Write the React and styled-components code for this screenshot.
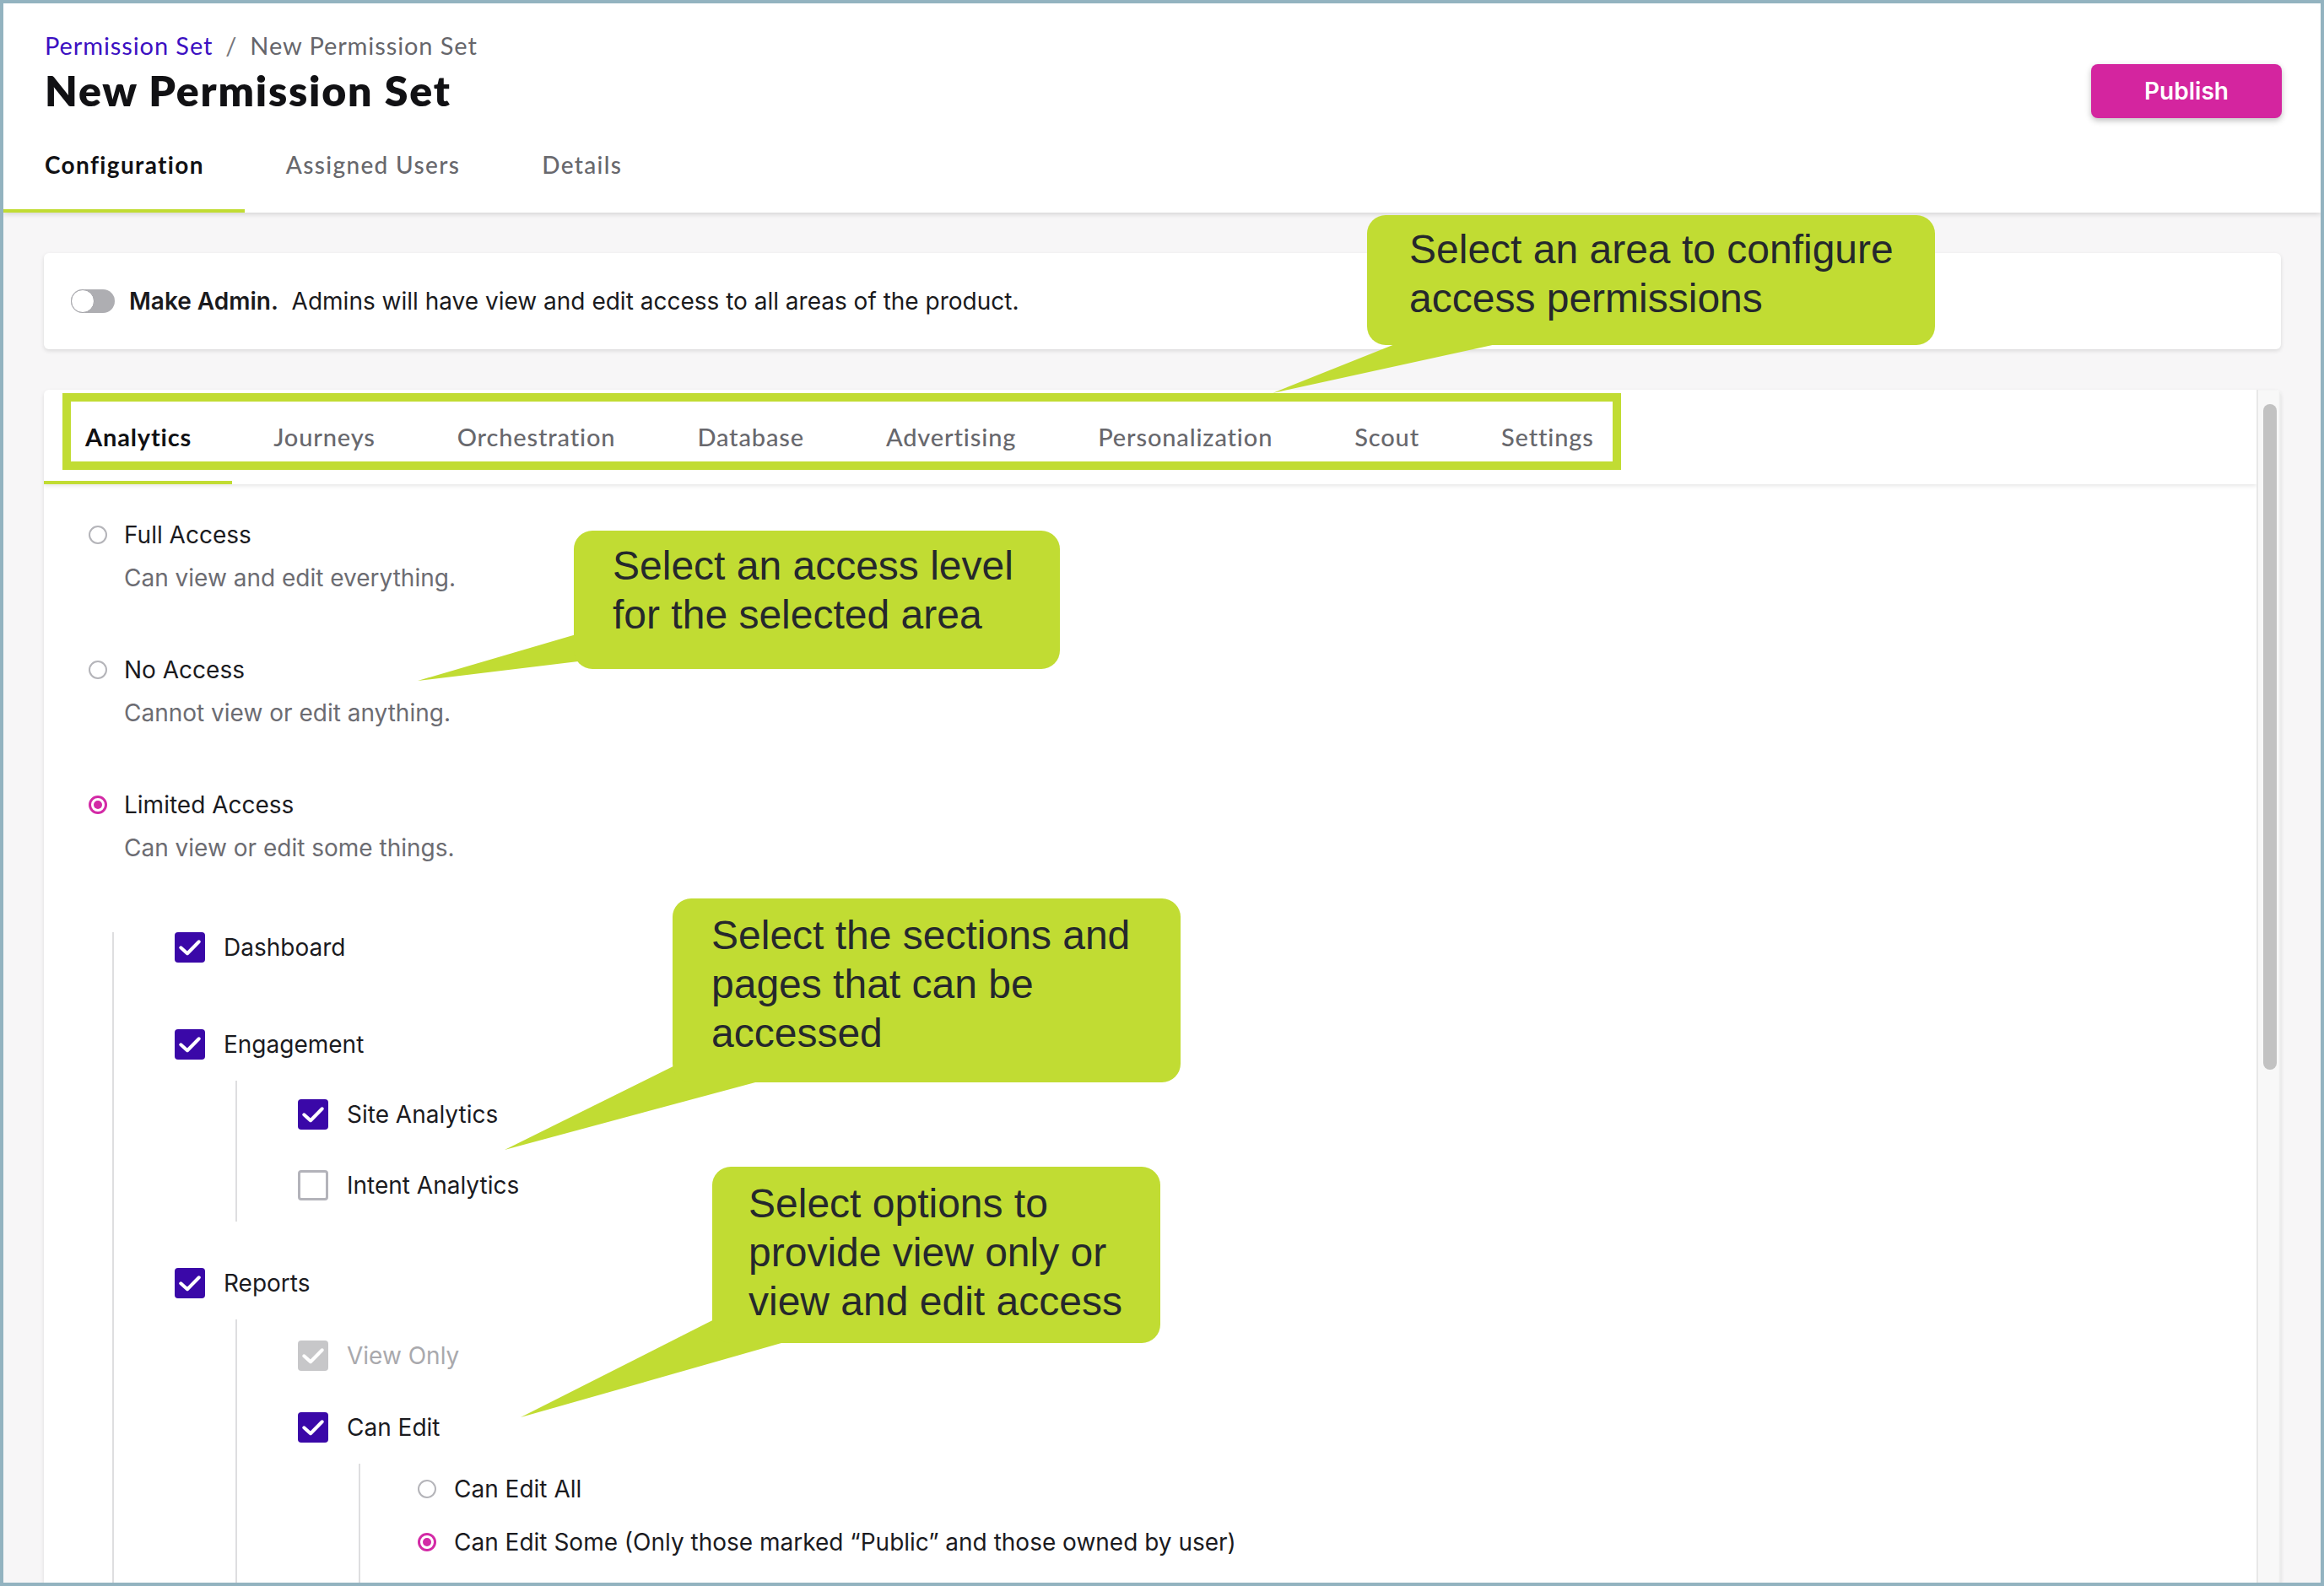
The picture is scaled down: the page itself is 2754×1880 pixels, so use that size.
import React from "react";
import styled, { createGlobalStyle } from "styled-components";

const LIME = "#c1dc33";
const INK = "#1b1b1f";
const MUTED = "#6c6c72";
const MAGENTA = "#d32aa6";
const INDIGO = "#3a08a8";

const GlobalStyle = createGlobalStyle`
  html, body { margin: 0; padding: 0; background: #ffffff; }
  body {
    font-family: Inter, "Liberation Sans", sans-serif;
    color: ${INK};
    -webkit-font-smoothing: antialiased;
  }
  *, *::before, *::after { box-sizing: border-box; }
`;

const Frame = styled.div`
  position: relative;
  width: 2754px;
  height: 1880px;
  border: 4px solid #93b3c0;
  overflow: hidden;
  display: flex;
  flex-direction: column;
  background: #f7f6f7;
`;

/* ---------- Header ---------- */

const Header = styled.header`
  flex: none;
  background: #ffffff;
  box-shadow: 0 2px 6px rgba(0, 0, 0, 0.14);
  position: relative;
  z-index: 2;
`;

const HeaderTop = styled.div`
  display: flex;
  justify-content: space-between;
  align-items: flex-end;
  padding: 32px 46px 0 49px;
`;

const TitleBlock = styled.div`
  display: flex;
  flex-direction: column;
`;

const Breadcrumb = styled.nav`
  font-family: Lato, "Open Sans", sans-serif;
  font-size: 29px;
  letter-spacing: 0.9px;
  line-height: 36px;
  color: #66666b;
  display: flex;
  align-items: center;
`;

const Crumb = styled.a`
  color: #3c10c2;
  text-decoration: none;
`;

const Sep = styled.span`
  margin: 0 15px;
  color: #77777c;
`;

const Title = styled.h1`
  margin: 7px 0 3px;
  font-family: Lato, "Open Sans", sans-serif;
  font-weight: 800;
  font-size: 50px;
  line-height: 56px;
  color: #111114;
  letter-spacing: 1.8px;
`;

const PublishButton = styled.button`
  width: 226px;
  height: 64px;
  margin-bottom: -2px;
  border: none;
  border-radius: 8px;
  background: #d4259f;
  color: #ffffff;
  font-family: Inter, "Liberation Sans", sans-serif;
  font-weight: 600;
  font-size: 28px;
  box-shadow: 0 3px 7px rgba(0, 0, 0, 0.25);
  cursor: pointer;
`;

const PageTabs = styled.div`
  display: flex;
`;

const PageTab = styled.div`
  height: 114px;
  padding: 4px 48px 0 49px;
  display: flex;
  align-items: center;
  font-family: Lato, "Open Sans", sans-serif;
  font-size: 28px;
  letter-spacing: 1.35px;
  font-weight: ${(p) => (p.$active ? 700 : 500)};
  color: ${(p) => (p.$active ? "#111114" : "#68686d")};
  border-bottom: 4px solid ${(p) => (p.$active ? LIME : "transparent")};
`;

/* ---------- Main ---------- */

const Main = styled.main`
  flex: 1;
  min-height: 0;
  display: flex;
  flex-direction: column;
  gap: 48px;
  padding: 48px 47px 0 48px;
`;

const AdminCard = styled.section`
  flex: none;
  height: 114px;
  background: #ffffff;
  border-radius: 6px;
  box-shadow: 0 2px 5px rgba(0, 0, 0, 0.12);
  display: flex;
  align-items: center;
  gap: 17px;
  padding-left: 32px;
`;

const Toggle = styled.span`
  width: 52px;
  height: 28px;
  border-radius: 14px;
  background: #aeaeb2;
  display: flex;
  align-items: center;
`;

const Knob = styled.span`
  width: 28px;
  height: 28px;
  border-radius: 50%;
  background: #ffffff;
  border: 1.5px solid #a3a3a8;
`;

const AdminText = styled.p`
  margin: 0;
  font-size: 28px;
  line-height: 40px;
  color: #1a1a1d;
`;

const Strong = styled.span`
  font-weight: 600;
`;

const AreaCard = styled.section`
  flex: 1;
  min-height: 0;
  background: #ffffff;
  border-radius: 6px 6px 0 0;
  box-shadow: 0 2px 5px rgba(0, 0, 0, 0.1);
  display: flex;
  overflow: hidden;
`;

const AreaScroll = styled.div`
  flex: 1;
  min-width: 0;
  display: flex;
  flex-direction: column;
  overflow: hidden;
`;

const AreaTabs = styled.div`
  flex: none;
  height: 112px;
  display: flex;
  box-shadow: 0 2px 5px rgba(0, 0, 0, 0.1);
  position: relative;
  z-index: 1;
`;

const AreaTab = styled.div`
  padding: 3px 48px 0 49px;
  display: flex;
  align-items: center;
  font-family: Lato, "Open Sans", sans-serif;
  font-size: 29px;
  letter-spacing: 0.85px;
  font-weight: ${(p) => (p.$active ? 700 : 500)};
  color: ${(p) => (p.$active ? "#111114" : "#68686d")};
  border-bottom: 4px solid ${(p) => (p.$active ? LIME : "transparent")};
`;

const AreaBody = styled.div`
  padding: 40px 0 0 53px;
  display: flex;
  flex-direction: column;
`;

const Scrollbar = styled.div`
  flex: none;
  width: 29px;
  background: #f8f8f8;
  border-left: 2px solid #e8e8e8;
  box-shadow: inset -2px 0 2px rgba(0, 0, 0, 0.05);
  display: flex;
  justify-content: center;
`;

const Thumb = styled.div`
  margin-top: 17px;
  width: 16px;
  height: 789px;
  border-radius: 8px;
  background: #c2c2c2;
`;

/* ---------- Access options ---------- */

const Options = styled.div`
  display: flex;
  flex-direction: column;
  gap: 69px;
`;

const Option = styled.div`
  display: flex;
  flex-direction: column;
  gap: 11px;
`;

const Line = styled.div`
  display: flex;
  align-items: center;
  gap: ${(p) => p.$gap || 20}px;
  height: ${(p) => p.$h || 40}px;
  font-size: 28px;
  line-height: 40px;
  color: ${(p) => (p.$dim ? "#a9a9ad" : INK)};
`;

const Desc = styled.div`
  padding-left: 42px;
  font-size: 28px;
  line-height: 40px;
  color: ${MUTED};
`;

const Radio = styled.span`
  flex: none;
  width: 22px;
  height: 22px;
  border-radius: 50%;
  border: ${(p) => (p.$on ? `3px solid ${MAGENTA}` : "2px solid #b4b4b9")};
  display: flex;
  align-items: center;
  justify-content: center;
`;

const Dot = styled.span`
  width: 10px;
  height: 10px;
  border-radius: 50%;
  background: ${MAGENTA};
`;

/* ---------- Tree ---------- */

const Tree = styled.div`
  margin: 80px 0 0 28px;
  border-left: 2px solid #dedee0;
  padding: 0 0 200px 72px;
  display: flex;
  flex-direction: column;
  gap: 55px;
`;

const TreeItem = styled.div`
  display: flex;
  flex-direction: column;
  padding-bottom: ${(p) => (p.$leaf ? 24 : 0)}px;
`;

const Children = styled.div`
  margin: 25px 0 0 72px;
  border-left: 2px solid #dedee0;
  padding: ${(p) => p.$pt || 22}px 0 ${(p) => p.$pb || 25}px ${(p) => p.$pl || 72}px;
  display: flex;
  flex-direction: column;
  gap: ${(p) => p.$gap || 48}px;
`;

const Box = styled.span`
  flex: none;
  width: 36px;
  height: 36px;
  border-radius: 4px;
  display: flex;
  align-items: center;
  justify-content: center;
  background: ${(p) =>
    p.$state === "on" ? INDIGO : p.$state === "disabled" ? "#c7c7c9" : "#ffffff"};
  border: ${(p) => (p.$state === "off" ? "3px solid #b3b3ba" : "none")};
`;

function Checkbox({ state }) {
  return (
    <Box $state={state}>
      {state !== "off" && (
        <svg width="30" height="30" viewBox="0 0 24 24" fill="none">
          <polyline
            points="3.4,12.2 9.6,17.8 20.6,6.6"
            stroke="#ffffff"
            strokeWidth="3.2"
            strokeLinecap="round"
            strokeLinejoin="round"
          />
        </svg>
      )}
    </Box>
  );
}

function CheckRow({ state, label }) {
  return (
    <Line $h={36} $gap={22} $dim={state === "disabled"}>
      <Checkbox state={state} />
      {label}
    </Line>
  );
}

function RadioRow({ on, label, gap = 20 }) {
  return (
    <Line $gap={gap} $h={36}>
      <Radio $on={on}>{on && <Dot />}</Radio>
      {label}
    </Line>
  );
}

/* ---------- Annotations ---------- */

const TabHighlight = styled.div`
  position: absolute;
  left: 70px;
  top: 462px;
  width: 1847px;
  height: 91px;
  border: 10px solid ${LIME};
  z-index: 8;
  pointer-events: none;
`;

const Tails = styled.svg`
  position: absolute;
  left: 0;
  top: 0;
  width: 2746px;
  height: 1872px;
  z-index: 9;
  pointer-events: none;
`;

const Callout = styled.div`
  position: absolute;
  left: ${(p) => p.$x - 4}px;
  top: ${(p) => p.$y - 4}px;
  width: ${(p) => p.$w}px;
  height: ${(p) => p.$h}px;
  padding: ${(p) => p.$pt}px 0 0 ${(p) => p.$pl}px;
  background: ${LIME};
  border-radius: 22px;
  font-family: "Liberation Sans", Arial, sans-serif;
  font-size: 48px;
  line-height: 58px;
  color: #25282c;
  white-space: nowrap;
  z-index: 10;
`;

const areaTabs = [
  "Analytics",
  "Journeys",
  "Orchestration",
  "Database",
  "Advertising",
  "Personalization",
  "Scout",
  "Settings",
];

const accessOptions = [
  { label: "Full Access", desc: "Can view and edit everything.", on: false },
  { label: "No Access", desc: "Cannot view or edit anything.", on: false },
  { label: "Limited Access", desc: "Can view or edit some things.", on: true },
];

export default function App() {
  return (
    <>
      <GlobalStyle />
      <Frame>
        <Header>
          <HeaderTop>
            <TitleBlock>
              <Breadcrumb>
                <Crumb href="#">Permission Set</Crumb>
                <Sep>/</Sep>
                <span>New Permission Set</span>
              </Breadcrumb>
              <Title>New Permission Set</Title>
            </TitleBlock>
            <PublishButton>Publish</PublishButton>
          </HeaderTop>
          <PageTabs>
            <PageTab $active>Configuration</PageTab>
            <PageTab>Assigned Users</PageTab>
            <PageTab>Details</PageTab>
          </PageTabs>
        </Header>

        <Main>
          <AdminCard>
            <Toggle>
              <Knob />
            </Toggle>
            <AdminText>
              <Strong>Make Admin.</Strong>
              {"\u00a0 Admins will have view and edit access to all areas of the product."}
            </AdminText>
          </AdminCard>

          <AreaCard>
            <AreaScroll>
              <AreaTabs>
                {areaTabs.map((t, i) => (
                  <AreaTab key={t} $active={i === 0}>
                    {t}
                  </AreaTab>
                ))}
              </AreaTabs>
              <AreaBody>
                <Options>
                  {accessOptions.map((o) => (
                    <Option key={o.label}>
                      <Line $gap={20}>
                        <Radio $on={o.on}>{o.on && <Dot />}</Radio>
                        {o.label}
                      </Line>
                      <Desc>{o.desc}</Desc>
                    </Option>
                  ))}
                </Options>

                <Tree>
                  <TreeItem $leaf>
                    <CheckRow state="on" label="Dashboard" />
                  </TreeItem>
                  <TreeItem>
                    <CheckRow state="on" label="Engagement" />
                    <Children>
                      <CheckRow state="on" label="Site Analytics" />
                      <CheckRow state="off" label="Intent Analytics" />
                    </Children>
                  </TreeItem>
                  <TreeItem>
                    <CheckRow state="on" label="Reports" />
                    <Children $pt={25} $pb={200} $gap={49}>
                      <CheckRow state="disabled" label="View Only" />
                      <TreeItem>
                        <CheckRow state="on" label="Can Edit" />
                        <Children $pt={12} $pl={68} $gap={27} $pb={200}>
                          <RadioRow on={false} label="Can Edit All" gap={21} />
                          <RadioRow
                            on
                            label="Can Edit Some (Only those marked “Public” and those owned by user)"
                            gap={21}
                          />
                        </Children>
                      </TreeItem>
                    </Children>
                  </TreeItem>
                </Tree>
              </AreaBody>
            </AreaScroll>
            <Scrollbar>
              <Thumb />
            </Scrollbar>
          </AreaCard>
        </Main>

        <TabHighlight />
        <Tails viewBox="4 4 2746 1872">
          <g fill={LIME}>
            <polygon points="1673,400 1810,400 1508,466" />
            <polygon points="710,744 710,781 495,807" />
            <polygon points="830,1248 910,1279 598,1363" />
            <polygon points="870,1552 940,1588 617,1680" />
          </g>
        </Tails>

        <Callout $x={1620} $y={255} $w={673} $h={154} $pt={12} $pl={50}>
          Select an area to configure
          <br />
          access permissions
        </Callout>
        <Callout $x={680} $y={629} $w={576} $h={164} $pt={13} $pl={46}>
          Select an access level
          <br />
          for the selected area
        </Callout>
        <Callout $x={797} $y={1065} $w={602} $h={218} $pt={15} $pl={46}>
          Select the sections and
          <br />
          pages that can be
          <br />
          accessed
        </Callout>
        <Callout $x={844} $y={1383} $w={531} $h={209} $pt={15} $pl={43}>
          Select options to
          <br />
          provide view only or
          <br />
          view and edit access
        </Callout>
      </Frame>
    </>
  );
}
